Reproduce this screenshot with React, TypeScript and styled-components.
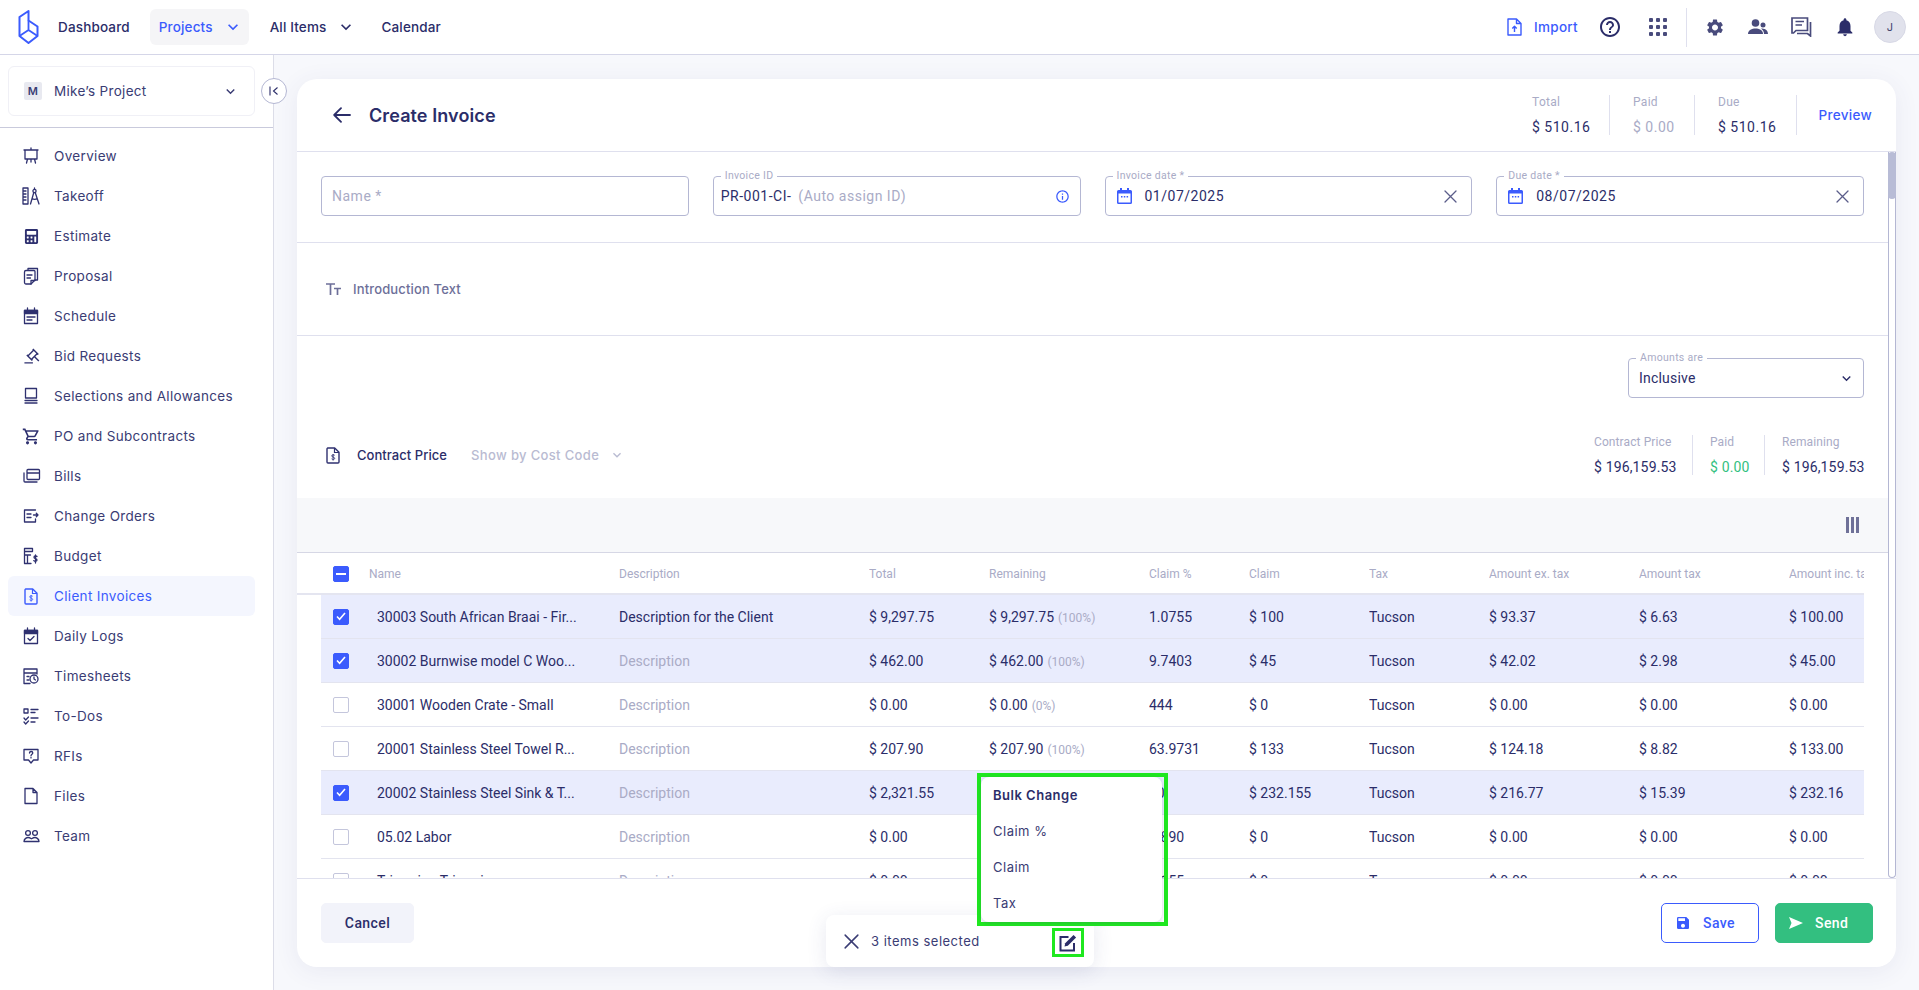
import React from "react";
import styled, { createGlobalStyle } from "styled-components";
import {
  MdNotifications,
  MdHelpOutline,
  MdSettings,
  MdOutlineShoppingCart,
  MdKeyboardArrowDown,
  MdSave,
  MdInfoOutline,
} from "react-icons/md";
import { FaCalculator } from "react-icons/fa";
import { RiAuctionLine } from "react-icons/ri";

const NAVY = "#2b2d69";
const BLUE = "#3b5bfd";
const LINE = "#dfe0ee";
const FIELD = "#b4b7d3";
const MUTED = "#a9abc6";

const GlobalStyle = createGlobalStyle`
  html, body { margin: 0; padding: 0; height: 100%; }
  body { font-family: Inter, "Liberation Sans", sans-serif; color: ${NAVY}; background: #fff; }
  #root { height: 100%; }
  * { box-sizing: border-box; }
`;

const Page = styled.div`
  height: 990px;
  display: flex;
  flex-direction: column;
  overflow: hidden;
`;

const TopBar = styled.header`
  height: 55px;
  flex: none;
  display: flex;
  align-items: center;
  padding: 0 13px 0 18px;
  border-bottom: 1px solid #d5d6e8;
  background: #fff;
`;

const Logo = styled.svg`
  width: 21px;
  height: 34px;
  margin-right: 10px;
  flex: none;
`;

const TopLink = styled.div<{ $active?: boolean; $gap?: number; $menu?: boolean }>`
  display: flex;
  align-items: center;
  height: 36px;
  border-radius: 6px;
  padding: 0 ${(p) => (p.$menu ? 6 : 9)}px 0 9px;
  margin-right: ${(p) => p.$gap ?? 0}px;
  font-size: 13.5px;
  font-weight: 500;
  letter-spacing: 0.15px;
  color: ${(p) => (p.$active ? BLUE : NAVY)};
  background: ${(p) => (p.$active ? "#f5f5f7" : "transparent")};
  svg { margin-left: 10px; }
`;

const TopRight = styled.div`
  margin-left: auto;
  display: flex;
  align-items: center;
`;

const ImportLink = styled.div`
  display: flex;
  align-items: center;
  gap: 12px;
  color: ${BLUE};
  font-size: 13.5px;
  font-weight: 500;
  letter-spacing: 0.3px;
  margin-right: 20px;
`;

const TopIcon = styled.div<{ $w: number; $color?: string; $left?: number }>`
  width: ${(p) => p.$w}px;
  margin-left: ${(p) => p.$left ?? 0}px;
  display: flex;
  justify-content: center;
  align-items: center;
  color: ${(p) => p.$color ?? NAVY};
`;

const DotGrid = styled.div`
  display: grid;
  grid-template-columns: repeat(3, 4px);
  grid-auto-rows: 4px;
  gap: 3px;
  margin: 0 19px 0 27px;
  span { background: #494b7c; border-radius: 1px; }
`;

const TopDivider = styled.div`
  width: 1px;
  height: 39px;
  background: ${LINE};
  margin-right: 18px;
`;

const Avatar = styled.div`
  width: 32px;
  height: 32px;
  border-radius: 50%;
  background: #e1e2ec;
  border: 1px solid #d8d9e6;
  display: flex;
  align-items: center;
  justify-content: center;
  font-size: 11px;
  color: #44466f;
  margin-left: 18px;
`;

const Body = styled.div`
  flex: 1;
  display: flex;
  min-height: 0;
`;

const Sidebar = styled.aside`
  width: 274px;
  flex: none;
  position: relative;
  border-right: 1px solid #dcdde8;
  background: #fff;
`;

const ProjectWrap = styled.div`
  height: 73px;
  padding: 11px 18px 0 8px;
  border-bottom: 1px solid #c9cadc;
`;

const ProjectBox = styled.div`
  height: 50px;
  border: 1px solid #f0f0f6;
  border-radius: 6px;
  display: flex;
  align-items: center;
  padding: 0 15px;
  font-size: 13.5px;
  letter-spacing: 0.3px;
  color: #3a3c74;
`;

const ProjectBadge = styled.div`
  width: 18px;
  height: 18px;
  border-radius: 2px;
  background: #e8e9f0;
  display: flex;
  align-items: center;
  justify-content: center;
  font-size: 11px;
  font-weight: 600;
  margin-right: 12px;
  color: #3a3c74;
`;

const CollapseButton = styled.button`
  position: absolute;
  top: 23px;
  left: 261px;
  width: 26px;
  height: 26px;
  padding: 0;
  border-radius: 50%;
  background: #fff;
  border: 1px solid #b4b7d3;
  display: flex;
  align-items: center;
  justify-content: center;
  color: ${NAVY};
  z-index: 2;
`;

const SideNav = styled.nav`
  padding: 8px 18px 0 8px;
`;

const SideItem = styled.div<{ $active?: boolean }>`
  height: 40px;
  display: flex;
  align-items: center;
  border-radius: 6px;
  font-size: 13.5px;
  letter-spacing: 0.33px;
  padding-left: 15px;
  color: ${(p) => (p.$active ? BLUE : "#3a3c74")};
  background: ${(p) => (p.$active ? "#f4f6fe" : "transparent")};
`;

const SideIcon = styled.span`
  width: 16px;
  height: 18px;
  margin-right: 15px;
  display: flex;
  align-items: center;
  justify-content: center;
  flex: none;
  svg { overflow: visible; }
`;

const Main = styled.main`
  flex: 1;
  min-width: 0;
  background: #f7f8fc;
  padding: 24px 23px 23px;
`;

const Card = styled.div`
  height: 100%;
  position: relative;
  display: flex;
  flex-direction: column;
  background: #fff;
  border-radius: 20px;
  box-shadow: 0 4px 24px rgba(60, 64, 130, 0.08);
`;

const CardHead = styled.div`
  height: 73px;
  flex: none;
  display: flex;
  align-items: center;
  padding: 0 24px 0 36px;
  border-bottom: 1px solid ${LINE};
`;

const Title = styled.h1`
  margin: 0 0 0 18px;
  font-size: 18px;
  font-weight: 600;
  letter-spacing: 0.1px;
  color: ${NAVY};
`;

const HeadStats = styled.div`
  margin-left: auto;
  display: flex;
  align-items: center;
`;

const Stat = styled.div<{ $w: number; $pad: number; $border?: boolean }>`
  width: ${(p) => p.$w}px;
  padding-left: ${(p) => p.$pad}px;
  height: 40px;
  border-right: ${(p) => (p.$border ? `1px solid ${LINE}` : "none")};
  display: flex;
  flex-direction: column;
  justify-content: space-between;
  font-family: Roboto, sans-serif;
`;

const StatLabel = styled.div<{ $tight?: boolean }>`
  font-size: 12px;
  line-height: 14px;
  letter-spacing: ${(p) => (p.$tight ? 0.1 : 0.3)}px;
  color: ${MUTED};
  white-space: nowrap;
`;

const StatValue = styled.div<{ $color?: string; $tight?: boolean }>`
  font-size: 14px;
  line-height: 16px;
  letter-spacing: ${(p) => (p.$tight ? 0.15 : 0.5)}px;
  color: ${(p) => p.$color ?? NAVY};
  white-space: nowrap;
`;

const Preview = styled.div`
  width: 75px;
  text-align: right;
  color: ${BLUE};
  font-size: 13.5px;
  font-weight: 500;
  letter-spacing: 0.3px;
`;

const ScrollArea = styled.div`
  flex: 1;
  min-height: 0;
  display: flex;
`;

const Content = styled.div`
  flex: 1;
  min-width: 0;
  display: flex;
  flex-direction: column;
`;

const ScrollTrack = styled.div`
  width: 8px;
  flex: none;
  border: 1px solid ${FIELD};
  border-top: none;
  border-radius: 0 0 4px 4px;
`;

const ScrollThumb = styled.div`
  height: 47px;
  margin: 0 -1px;
  border-radius: 4px;
  background: #b8bcd6;
`;

const FieldRow = styled.section`
  height: 91px;
  flex: none;
  padding: 24px;
  display: grid;
  grid-template-columns: repeat(4, 1fr);
  gap: 24px;
  border-bottom: 1px solid ${LINE};
`;

const Field = styled.div<{ $width?: number }>`
  position: relative;
  height: 40px;
  width: ${(p) => (p.$width ? `${p.$width}px` : "auto")};
  border: 1px solid ${FIELD};
  border-radius: 4px;
  display: flex;
  align-items: center;
  padding: 0 7px;
  font-family: Roboto, sans-serif;
  font-size: 14px;
  letter-spacing: 0.5px;
`;

const FieldLabel = styled.label`
  position: absolute;
  left: 7px;
  top: -7px;
  padding: 0 4px;
  background: #fff;
  font-size: 10.5px;
  line-height: 12px;
  letter-spacing: 0.3px;
  color: ${MUTED};
`;

const Placeholder = styled.span<{ $indent?: number }>`
  color: ${MUTED};
  margin-left: ${(p) => p.$indent ?? 0}px;
`;

const FieldEnd = styled.span<{ $inset?: number }>`
  margin-left: auto;
  margin-right: ${(p) => p.$inset ?? 0}px;
  display: flex;
  align-items: center;
`;

const DateIcon = styled.span`
  display: flex;
  margin: 0 13px 0 4px;
`;

const InclusiveText = styled.span`
  margin-left: 3px;
  letter-spacing: 0.2px;
`;

const IntroRow = styled.section`
  height: 93px;
  flex: none;
  display: flex;
  align-items: center;
  padding: 0 24px 0 29px;
  gap: 12px;
  font-size: 13px;
  font-weight: 500;
  letter-spacing: 0.15px;
  color: #6d6f99;
  border-bottom: 1px solid ${LINE};
`;

const Settings = styled.section`
  height: 162px;
  flex: none;
  padding: 22px 24px 0;
`;

const SettingsTop = styled.div`
  display: flex;
  justify-content: flex-end;
  margin-bottom: 37px;
`;

const SettingsRow = styled.div`
  display: flex;
  align-items: center;
`;

const ContractTitle = styled.div`
  display: flex;
  align-items: center;
  gap: 17px;
  margin-left: 5px;
  font-size: 13px;
  font-weight: 500;
  letter-spacing: 0.05px;
`;

const CostCode = styled.div`
  display: flex;
  align-items: center;
  gap: 10px;
  margin-left: 24px;
  font-size: 13px;
  letter-spacing: 0.35px;
  color: #b9bbd2;
  font-weight: 500;
`;

const ContractStats = styled.div`
  margin-left: auto;
  display: flex;
`;

const Toolbar = styled.div`
  height: 55px;
  flex: none;
  background: #f7f8fa;
  display: flex;
  align-items: center;
  justify-content: flex-end;
  padding-right: 29px;
  border-bottom: 1px solid #d6d7e5;
`;

const ColumnBars = styled.div`
  display: flex;
  gap: 2px;
  span { width: 3px; height: 16px; background: #6f7198; }
`;

const TableClip = styled.div`
  flex: 1;
  min-height: 0;
  overflow: hidden;
`;

const COLUMNS = "48px 250px 250px 120px 160px 100px 120px 120px 150px 150px 75px";

const HeadRow = styled.div`
  height: 42px;
  display: grid;
  grid-template-columns: ${COLUMNS};
  align-items: center;
  margin: 0 24px;
  position: relative;
  font-family: Roboto, sans-serif;
  font-size: 12px;
  letter-spacing: 0;
  color: ${MUTED};
  &::after {
    content: "";
    position: absolute;
    left: -24px;
    right: 0;
    bottom: 0;
    height: 2px;
    background: #e4e5f0;
  }
`;

const Row = styled.div<{ $selected?: boolean }>`
  height: 44px;
  display: grid;
  grid-template-columns: ${COLUMNS};
  align-items: center;
  margin: 0 24px;
  font-family: Roboto, sans-serif;
  font-size: 14px;
  letter-spacing: 0;
  color: ${NAVY};
  background: ${(p) => (p.$selected ? "#e9ecfd" : "#fff")};
  border-bottom: 1px solid #e3e4ef;
`;

const Cell = styled.div<{ $muted?: boolean; $indent?: boolean }>`
  white-space: nowrap;
  overflow: hidden;
  color: ${(p) => (p.$muted ? MUTED : "inherit")};
  padding-left: ${(p) => (p.$indent ? 8 : 0)}px;
`;

const Percent = styled.span`
  margin-left: 4px;
  font-size: 12px;
  color: ${MUTED};
`;

const Check = styled.span<{ $state: "on" | "off" | "some" }>`
  width: 16px;
  height: 16px;
  margin-left: 12px;
  border-radius: 2px;
  display: flex;
  align-items: center;
  justify-content: center;
  background: ${(p) => (p.$state === "off" ? "#fff" : BLUE)};
  border: 1px solid ${(p) => (p.$state === "off" ? "#c4c6dc" : BLUE)};
`;

const Footer = styled.footer`
  height: 89px;
  flex: none;
  display: flex;
  align-items: center;
  padding: 0 23px 0 24px;
  border-top: 1px solid ${LINE};
`;

const Button = styled.button<{ $kind: "plain" | "outline" | "green" }>`
  height: 40px;
  border-radius: 5px;
  font-family: Roboto, sans-serif;
  font-size: 14px;
  font-weight: 500;
  letter-spacing: 0.4px;
  display: flex;
  align-items: center;
  justify-content: ${(p) => (p.$kind === "plain" ? "center" : "flex-start")};
  padding: 0 0 0 ${(p) => (p.$kind === "plain" ? 0 : 13)}px;
  gap: 12px;
  width: ${(p) => (p.$kind === "plain" ? 93 : 98)}px;
  margin-left: ${(p) => (p.$kind === "green" ? 16 : 0)}px;
  color: ${(p) => (p.$kind === "plain" ? NAVY : p.$kind === "outline" ? BLUE : "#fff")};
  background: ${(p) => (p.$kind === "plain" ? "#f2f3fa" : p.$kind === "outline" ? "#fff" : "#33bf80")};
  border: 1px solid ${(p) => (p.$kind === "plain" ? "#f2f3fa" : p.$kind === "outline" ? BLUE : "#33bf80")};
`;

const FooterEnd = styled.div`
  margin-left: auto;
  display: flex;
`;

const SelectionBar = styled.div`
  position: absolute;
  left: 529px;
  bottom: 0;
  width: 268px;
  height: 52px;
  background: #fff;
  border-radius: 8px;
  box-shadow: 0 4px 20px rgba(60, 64, 130, 0.12);
  display: flex;
  align-items: center;
  padding-left: 18px;
  gap: 12px;
  font-size: 13px;
  letter-spacing: 0.5px;
  color: #3a3c74;
  z-index: 3;
`;

const EditMark = styled.div`
  position: absolute;
  left: 226px;
  top: 13px;
  width: 32px;
  height: 29px;
  border: 3px solid #1fe81f;
  display: flex;
  align-items: center;
  justify-content: center;
`;

const BulkMark = styled.div`
  position: absolute;
  left: 680px;
  top: 694px;
  width: 191px;
  height: 153px;
  border: 4px solid #1fe81f;
  z-index: 4;
`;

const BulkMenu = styled.div`
  height: 100%;
  margin-right: 2px;
  background: #fff;
  border-radius: 8px;
  box-shadow: 0 1px 4px rgba(60, 64, 130, 0.25);
`;

const BulkItem = styled.div<{ $head?: boolean }>`
  height: 36px;
  display: flex;
  align-items: center;
  padding-left: 12px;
  font-size: 13px;
  letter-spacing: 0.5px;
  font-weight: ${(p) => (p.$head ? 600 : 400)};
  color: ${(p) => (p.$head ? NAVY : "#3a3c74")};
`;

const Ico = ({ children, c = "#2f3170", w = 16, h = 18, vb = "0 0 16 18" }: { children: React.ReactNode; c?: string; w?: number; h?: number; vb?: string }) => (
  <svg width={w} height={h} viewBox={vb} fill="none" stroke={c} strokeWidth="1.3" strokeLinejoin="round" strokeLinecap="round">
    {children}
  </svg>
);

const InvoiceIcon = ({ c = "#2f3170", w = 14, h = 17 }: { c?: string; w?: number; h?: number }) => (
  <svg width={w} height={h} viewBox="0 0 14 17" fill="none">
    <path d="M1.500 1h7.200L13 5.300V15a1 1 0 0 1-1 1H2a1 1 0 0 1-1-1V2a1 1 0 0 1 .5-1z" stroke={c} strokeWidth="1.400" strokeLinejoin="round" />
    <path d="M8.500 1v4.500H13" stroke={c} strokeWidth="1.200" />
    <path d="M8.700 8.300c-.4-.6-2.900-.9-3 .6 0 1.500 3 .9 3 2.500 0 1.400-2.500 1.100-3.100.4M7.100 7v6.600" stroke={c} strokeWidth=".9" />
  </svg>
);

const CalendarIcon = ({ c = BLUE }: { c?: string }) => (
  <svg width="15" height="16" viewBox="0 0 15 16">
    <path d="M3 0h2v2h5V0h2v2h1.500A1.500 1.500 0 0 1 15 3.500v11a1.500 1.500 0 0 1-1.500 1.500h-12A1.500 1.500 0 0 1 0 14.500v-11A1.500 1.500 0 0 1 1.500 2H3z" fill={c} />
    <rect x="1.500" y="5.500" width="12" height="9" fill="#fff" />
    <path d="M4 8h1.500v1.500H4zM6.800 8h1.500v1.500H6.800zM9.600 8h1.500v1.500H9.600z" fill={c} />
  </svg>
);

const CloseIcon = ({ size = 13, c = "#5b5d8a" }: { size?: number; c?: string }) => (
  <svg width={size} height={size} viewBox="0 0 13 13" fill="none" stroke={c} strokeWidth="1.300" strokeLinecap="round">
    <path d="M1 1l11 11M12 1L1 12" />
  </svg>
);

const navItems: { label: string; icon: React.ReactNode; active?: boolean }[] = [
  { label: "Overview", icon: <Ico><path d="M1 3h14M2 3v9h12V3M8 1v2M4.500 12l-1 4M11.500 12l1 4M8 12v3" /></Ico> },
  { label: "Takeoff", icon: <Ico w={18} vb="0 0 18 18"><path d="M1 1v16h5V1zM1 4h3M1 7h3M1 10h3M1 13h3" /><circle cx="12.500" cy="4" r="1.600" /><path d="M11.800 5.500L8.500 17M13.200 5.500L17 17M12.500 1v1.400M10 11.500c1.500 1 3.800 1 5.200 0" /></Ico> },
  { label: "Estimate", icon: <FaCalculator size={15} color="#2f3170" /> },
  { label: "Proposal", icon: <Ico><path d="M5 3V1.500h9.500V13H12" /><path d="M1.500 5A1.500 1.500 0 0 1 3 3.500h8A1 1 0 0 1 12 4.500V13l-4 4H3a1.500 1.500 0 0 1-1.500-1.500z" /><path d="M4 8h5M4 11h3.500M8 17v-3.500h4" /></Ico> },
  { label: "Schedule", icon: <Ico><path d="M1.500 3.500h13v13h-13zM4.500 1v3M11.500 1v3" /><path d="M1.500 3.500h13v3h-13z" fill="#2f3170" /><path d="M4 10h8M4 13h5" /></Ico> },
  { label: "Bid Requests", icon: <RiAuctionLine size={17} color="#2f3170" /> },
  { label: "Selections and Allowances", icon: <Ico><path d="M2.500 1.500h11V11h-11zM2 13.500h12M2 16h12" /></Ico> },
  { label: "PO and Subcontracts", icon: <MdOutlineShoppingCart size={19} color="#2f3170" /> },
  { label: "Bills", icon: <Ico w={17} vb="0 0 17 18"><path d="M4 3.500a1 1 0 0 1 1-1h10.500a1 1 0 0 1 1 1v8a1 1 0 0 1-1 1H5a1 1 0 0 1-1-1zM4 6h12.500M1 6v8a1 1 0 0 0 1 1h12" /></Ico> },
  { label: "Change Orders", icon: <Ico><path d="M12.500 3H1.500v12h11v-3M4 7h4M4 10.500h4" /><path d="M10.500 8H15M13.300 6.200L15 8l-1.700 1.800" /></Ico> },
  { label: "Budget", icon: <Ico><path d="M1.500 1.500h8v3h-8zM1.500 4.500v12H8M1.500 8h6M4.500 8v8" /><path d="M14 9.500c-.6-.8-3-1-3 .8 0 1.700 3 1 3 2.700 0 1.700-2.500 1.400-3.200.6M12.500 8v8" /></Ico> },
  { label: "Client Invoices", active: true, icon: <InvoiceIcon c={BLUE} /> },
  { label: "Daily Logs", icon: <Ico><path d="M1.500 3.500h13v13h-13zM4.500 1v3M11.500 1v3" /><path d="M1.500 3.500h13v3h-13z" fill="#2f3170" /><path d="M5 11.500l2 2 4-4" /></Ico> },
  { label: "Timesheets", icon: <Ico w={16} vb="0 0 16 18"><path d="M7 16.500H1V2h13v5M1 6h13M4 9.500h2M4 13h2" /><circle cx="11" cy="12" r="4" /><path d="M11 10v2l1.500 1" /></Ico> },
  { label: "To-Dos", icon: <Ico><path d="M1 2h4v4H1zM8 2.500h7M8 5.500h4M1 11l1.700 2L5.500 10M1 15l1.700 2 2.800-3M8 11h7M8 15h4" /></Ico> },
  { label: "RFIs", icon: <Ico><path d="M1 2.500h14v10.500h-4.500L8 16l-2.500-3H1z" /><path d="M6.500 6c0-2 3.300-2 3.300 0 0 1.200-1.800 1.300-1.800 2.800M8 10.500v.4" /></Ico> },
  { label: "Files", icon: <Ico><path d="M2 1.500h8l4 4v11H2zM10 1.500v4h4" /></Ico> },
  { label: "Team", icon: <Ico w={17} vb="0 0 17 18"><circle cx="5" cy="6" r="2.400" /><circle cx="12" cy="6" r="2.400" /><path d="M1 14.500c0-3 3-4 4-4s1.800.3 3.500 1.300c1.700-1 2.500-1.300 3.500-1.300s4 1 4 4z" /></Ico> },
];

type RowData = {
  name: string;
  desc?: string;
  total: string;
  remain: string;
  pct: string;
  claimPct: string;
  claim: string;
  ex: string;
  tax: string;
  inc: string;
  on?: boolean;
};

const rows: RowData[] = [
  { name: "30003 South African Braai - Fir...", desc: "Description for the Client", total: "$ 9,297.75", remain: "$ 9,297.75", pct: "(100%)", claimPct: "1.0755", claim: "$ 100", ex: "$ 93.37", tax: "$ 6.63", inc: "$ 100.00", on: true },
  { name: "30002 Burnwise model C Woo...", total: "$ 462.00", remain: "$ 462.00", pct: "(100%)", claimPct: "9.7403", claim: "$ 45", ex: "$ 42.02", tax: "$ 2.98", inc: "$ 45.00", on: true },
  { name: "30001 Wooden Crate - Small", total: "$ 0.00", remain: "$ 0.00", pct: "(0%)", claimPct: "444", claim: "$ 0", ex: "$ 0.00", tax: "$ 0.00", inc: "$ 0.00" },
  { name: "20001 Stainless Steel Towel R...", total: "$ 207.90", remain: "$ 207.90", pct: "(100%)", claimPct: "63.9731", claim: "$ 133", ex: "$ 124.18", tax: "$ 8.82", inc: "$ 133.00" },
  { name: "20002 Stainless Steel Sink & T...", total: "$ 2,321.55", remain: "$ 2,321.55", pct: "(100%)", claimPct: "10", claim: "$ 232.155", ex: "$ 216.77", tax: "$ 15.39", inc: "$ 232.16", on: true },
  { name: "05.02 Labor", total: "$ 0.00", remain: "$ 0.00", pct: "(0%)", claimPct: "1.890", claim: "$ 0", ex: "$ 0.00", tax: "$ 0.00", inc: "$ 0.00" },
  { name: "Trimming Trimming", total: "$ 0.00", remain: "$ 0.00", pct: "(0%)", claimPct: "1.155", claim: "$ 0", ex: "$ 0.00", tax: "$ 0.00", inc: "$ 0.00" },
];

const headers = ["Name", "Description", "Total", "Remaining", "Claim %", "Claim", "Tax", "Amount ex. tax", "Amount tax", "Amount inc. tax"];

const CheckMark = () => (
  <svg width="10" height="9" viewBox="0 0 10 9" fill="none" stroke="#fff" strokeWidth="1.600">
    <path d="M1 4.500l2.600 2.800L9 1" />
  </svg>
);

export default function App() {
  return (
    <Page>
      <GlobalStyle />
      <TopBar>
        <Logo viewBox="0 0 21 34" fill="none" stroke={BLUE} strokeWidth="2" strokeLinejoin="round">
          <path d="M10.500 1L1.500 7v19l9 7 9-7v-9.500l-9-6V1z" />
          <path d="M1.500 26l9-6 9 6M10.500 10.500V20" strokeWidth="1.800" />
        </Logo>
        <TopLink $gap={11}>Dashboard</TopLink>
        <TopLink $active $menu $gap={12}>
          Projects
          <MdKeyboardArrowDown size={20} color={BLUE} />
        </TopLink>
        <TopLink $menu $gap={10}>
          All Items
          <MdKeyboardArrowDown size={20} color={NAVY} />
        </TopLink>
        <TopLink>Calendar</TopLink>
        <TopRight>
          <ImportLink>
            <svg width="15" height="18" viewBox="0 0 15 18" fill="none" stroke={BLUE} strokeWidth="1.400" strokeLinejoin="round">
              <path d="M1 1h8.500L14 5.500V17H1zM9.500 1v4.500H14M7.500 14V8.500M5.300 10.500l2.200-2.200 2.200 2.200" />
            </svg>
            Import
          </ImportLink>
          <TopIcon $w={24}>
            <MdHelpOutline size={24} />
          </TopIcon>
          <DotGrid>
            {Array.from({ length: 9 }).map((_, i) => (
              <span key={i} />
            ))}
          </DotGrid>
          <TopDivider />
          <TopIcon $w={20} $color="#494b7c">
            <MdSettings size={21} />
          </TopIcon>
          <TopIcon $w={22} $left={22} $color="#494b7c">
            <svg width="20" height="16" viewBox="0 0 20 16" fill="#494b7c">
              <circle cx="7.500" cy="4" r="3.800" />
              <path d="M0 15c0-4 4-5.500 7.500-5.500S15 11 15 15z" />
              <circle cx="15" cy="6" r="2.500" />
              <path d="M13 9.500c3 0 7 1 7 5.500h-4c0-2-1-4-3-5.500z" />
            </svg>
          </TopIcon>
          <TopIcon $w={22} $left={21} $color="#494b7c">
            <svg width="21" height="20" viewBox="0 0 21 20" fill="none" stroke="#494b7c" strokeWidth="1.700">
              <path d="M1 1h15.500v12.500H5L2.500 16H1zM4.500 4.500h8.500M4.500 8h6.500M19.500 5v14l-3-2.500H6" />
            </svg>
          </TopIcon>
          <TopIcon $w={22} $left={22} $color={NAVY}>
            <MdNotifications size={24} />
          </TopIcon>
          <Avatar>J</Avatar>
        </TopRight>
      </TopBar>
      <Body>
        <Sidebar>
          <ProjectWrap>
            <ProjectBox>
              <ProjectBadge>M</ProjectBadge>
              Mike’s Project
              <MdKeyboardArrowDown size={17} style={{ marginLeft: "auto" }} />
            </ProjectBox>
          </ProjectWrap>
          <CollapseButton aria-label="Collapse">
            <svg width="10" height="10" viewBox="0 0 10 10" fill="none" stroke={NAVY} strokeWidth="1.100">
              <path d="M1 .5v9M8.500 1.500L4.500 5l4 3.500" />
            </svg>
          </CollapseButton>
          <SideNav>
            {navItems.map((item) => (
              <SideItem key={item.label} $active={item.active}>
                <SideIcon>{item.icon}</SideIcon>
                {item.label}
              </SideItem>
            ))}
          </SideNav>
        </Sidebar>
        <Main>
          <Card>
            <CardHead>
              <svg width="18" height="16" viewBox="0 0 18 16" fill="none" stroke={NAVY} strokeWidth="1.800" strokeLinecap="round" strokeLinejoin="round">
                <path d="M1.500 8H17M8 1.200L1.200 8 8 14.800" />
              </svg>
              <Title>Create Invoice</Title>
              <HeadStats>
                <Stat $w={78} $border $pad={0}>
                  <StatLabel>Total</StatLabel>
                  <StatValue>$ 510.16</StatValue>
                </Stat>
                <Stat $w={85} $border $pad={23}>
                  <StatLabel>Paid</StatLabel>
                  <StatValue $color={MUTED}>$ 0.00</StatValue>
                </Stat>
                <Stat $w={102} $border $pad={23}>
                  <StatLabel>Due</StatLabel>
                  <StatValue>$ 510.16</StatValue>
                </Stat>
                <Preview>Preview</Preview>
              </HeadStats>
            </CardHead>
            <ScrollArea>
              <Content>
                <FieldRow>
                  <Field>
                    <Placeholder $indent={3}>Name *</Placeholder>
                  </Field>
                  <Field>
                    <FieldLabel>Invoice ID</FieldLabel>
                    PR-001-CI-
                    <Placeholder $indent={7}>(Auto assign ID)</Placeholder>
                    <FieldEnd $inset={3}>
                      <MdInfoOutline size={15} color={BLUE} />
                    </FieldEnd>
                  </Field>
                  <Field>
                    <FieldLabel>Invoice date *</FieldLabel>
                    <DateIcon>
                      <CalendarIcon />
                    </DateIcon>
                    01/07/2025
                    <FieldEnd $inset={7}>
                      <CloseIcon />
                    </FieldEnd>
                  </Field>
                  <Field>
                    <FieldLabel>Due date *</FieldLabel>
                    <DateIcon>
                      <CalendarIcon />
                    </DateIcon>
                    08/07/2025
                    <FieldEnd $inset={7}>
                      <CloseIcon />
                    </FieldEnd>
                  </Field>
                </FieldRow>
                <IntroRow>
                  <svg width="15" height="12" viewBox="0 0 15 12" fill="none" stroke="#6d6f99" strokeWidth="1.700">
                    <path d="M0 1h9M4.500 1v11M8 5.500h7M11.500 5.500V12" />
                  </svg>
                  Introduction Text
                </IntroRow>
                <Settings>
                  <SettingsTop>
                    <Field $width={236}>
                      <FieldLabel>Amounts are</FieldLabel>
                      <InclusiveText>Inclusive</InclusiveText>
                      <FieldEnd $inset={1}>
                        <MdKeyboardArrowDown size={17} />
                      </FieldEnd>
                    </Field>
                  </SettingsTop>
                  <SettingsRow>
                    <ContractTitle>
                      <InvoiceIcon />
                      Contract Price
                    </ContractTitle>
                    <CostCode>
                      Show by Cost Code
                      <MdKeyboardArrowDown size={16} color="#b9bbd2" />
                    </CostCode>
                    <ContractStats>
                      <Stat $w={99} $border $pad={0}>
                        <StatLabel $tight>Contract Price</StatLabel>
                        <StatValue $tight>$ 196,159.53</StatValue>
                      </Stat>
                      <Stat $w={72} $border $pad={17}>
                        <StatLabel $tight>Paid</StatLabel>
                        <StatValue $tight $color="#33bf80">$ 0.00</StatValue>
                      </Stat>
                      <Stat $w={99} $pad={17}>
                        <StatLabel $tight>Remaining</StatLabel>
                        <StatValue $tight>$ 196,159.53</StatValue>
                      </Stat>
                    </ContractStats>
                  </SettingsRow>
                </Settings>
                <Toolbar>
                  <ColumnBars>
                    <span />
                    <span />
                    <span />
                  </ColumnBars>
                </Toolbar>
                <TableClip>
                  <HeadRow>
                    <Check $state="some">
                      <svg width="10" height="2" viewBox="0 0 10 2">
                        <rect width="10" height="2" fill="#fff" />
                      </svg>
                    </Check>
                    {headers.map((h) => (
                      <Cell key={h}>{h}</Cell>
                    ))}
                  </HeadRow>
                  {rows.map((r) => (
                    <Row key={r.name} $selected={r.on}>
                      <Check $state={r.on ? "on" : "off"}>{r.on && <CheckMark />}</Check>
                      <Cell $indent>{r.name}</Cell>
                      <Cell $muted={!r.desc}>{r.desc ?? "Description"}</Cell>
                      <Cell>{r.total}</Cell>
                      <Cell>
                        {r.remain}
                        <Percent>{r.pct}</Percent>
                      </Cell>
                      <Cell>{r.claimPct}</Cell>
                      <Cell>{r.claim}</Cell>
                      <Cell>Tucson</Cell>
                      <Cell>{r.ex}</Cell>
                      <Cell>{r.tax}</Cell>
                      <Cell>{r.inc}</Cell>
                    </Row>
                  ))}
                </TableClip>
              </Content>
              <ScrollTrack>
                <ScrollThumb />
              </ScrollTrack>
            </ScrollArea>
            <Footer>
              <Button $kind="plain">Cancel</Button>
              <FooterEnd>
                <Button $kind="outline">
                  <MdSave size={16} color={BLUE} />
                  Save
                </Button>
                <Button $kind="green">
                  <svg width="14" height="12" viewBox="0 0 14 12" fill="#fff">
                    <path d="M0 0l14 6-14 6 2.500-6z" />
                  </svg>
                  Send
                </Button>
              </FooterEnd>
            </Footer>
            <BulkMark>
              <BulkMenu>
                <BulkItem $head>Bulk Change</BulkItem>
                <BulkItem>Claim %</BulkItem>
                <BulkItem>Claim</BulkItem>
                <BulkItem>Tax</BulkItem>
              </BulkMenu>
            </BulkMark>
            <SelectionBar>
              <CloseIcon size={15} c="#3a3c74" />
              3 items selected
              <EditMark>
                <svg width="18" height="18" viewBox="0 0 18 18" fill="none" stroke={NAVY} strokeWidth="2">
                  <path d="M9.500 3H1.500v13.500H15V9" />
                  <path d="M5.500 12.500l.7-3.300L14.500.9l2.600 2.600-8.300 8.300z" fill={NAVY} stroke="none" />
                </svg>
              </EditMark>
            </SelectionBar>
          </Card>
        </Main>
      </Body>
    </Page>
  );
}
